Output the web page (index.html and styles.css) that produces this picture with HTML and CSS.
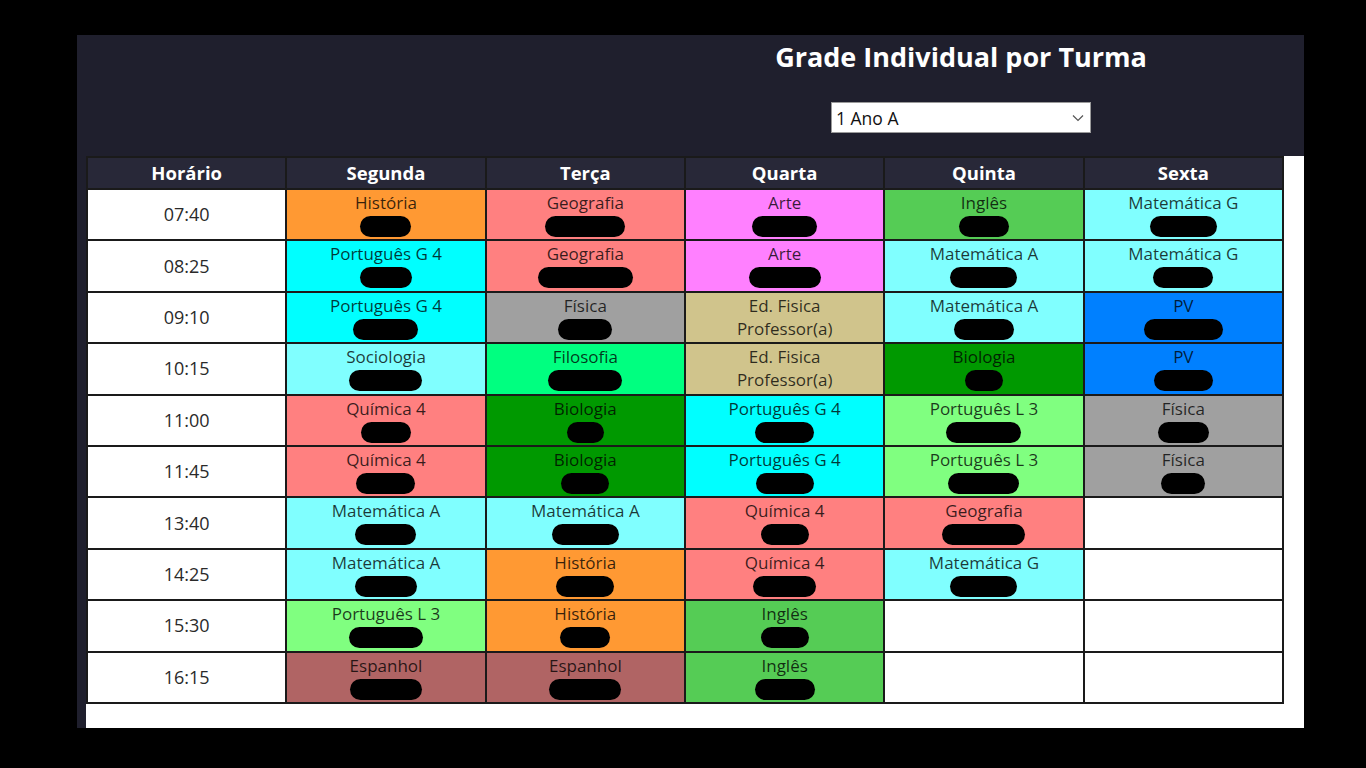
FILE: index.html
```html
<!DOCTYPE html>
<html lang="pt-BR">
<head>
<meta charset="utf-8">
<title>Grade Individual por Turma</title>
<link rel="stylesheet" href="styles.css">
</head>
<body>
<div class="panel">
  <header class="top">
    <div class="spacer"></div>
    <div class="head-main">
      <h1 class="title">Grade Individual por Turma</h1>
      <div class="select-wrap">
        <select class="turma">
          <option>1 Ano A</option>
        </select>
        <svg class="chev" width="12" height="8" viewBox="0 0 12 8"><path d="M1 1.5 L6 6.5 L11 1.5" fill="none" stroke="#555" stroke-width="1.2"/></svg>
      </div>
    </div>
  </header>
  <main class="content">
    <table class="grade">
      <thead>
        <tr>
          <th>Horário</th><th>Segunda</th><th>Terça</th><th>Quarta</th><th>Quinta</th><th>Sexta</th>
        </tr>
      </thead>
      <tbody>
        <tr>
          <td class="time">07:40</td>
          <td class="c-hist">História<span class="blob" style="width:51px"></span></td>
          <td class="c-geo">Geografia<span class="blob" style="width:80px"></span></td>
          <td class="c-arte">Arte<span class="blob" style="width:65px"></span></td>
          <td class="c-ing">Inglês<span class="blob" style="width:50px"></span></td>
          <td class="c-mat">Matemática G<span class="blob" style="width:67px"></span></td>
        </tr>
        <tr>
          <td class="time">08:25</td>
          <td class="c-pg">Português G 4<span class="blob" style="width:52px"></span></td>
          <td class="c-geo">Geografia<span class="blob" style="width:95px"></span></td>
          <td class="c-arte">Arte<span class="blob" style="width:72px"></span></td>
          <td class="c-mat">Matemática A<span class="blob" style="width:67px"></span></td>
          <td class="c-mat">Matemática G<span class="blob" style="width:60px"></span></td>
        </tr>
        <tr>
          <td class="time">09:10</td>
          <td class="c-pg">Português G 4<span class="blob" style="width:65px"></span></td>
          <td class="c-fis">Física<span class="blob" style="width:54px"></span></td>
          <td class="c-edf">Ed. Fisica<br>Professor(a)</td>
          <td class="c-mat">Matemática A<span class="blob" style="width:60px"></span></td>
          <td class="c-pv">PV<span class="blob" style="width:79px"></span></td>
        </tr>
        <tr>
          <td class="time">10:15</td>
          <td class="c-mat">Sociologia<span class="blob" style="width:73px"></span></td>
          <td class="c-filo">Filosofia<span class="blob" style="width:74px"></span></td>
          <td class="c-edf">Ed. Fisica<br>Professor(a)</td>
          <td class="c-bio">Biologia<span class="blob" style="width:38px"></span></td>
          <td class="c-pv">PV<span class="blob" style="width:59px"></span></td>
        </tr>
        <tr>
          <td class="time">11:00</td>
          <td class="c-geo">Química 4<span class="blob" style="width:50px"></span></td>
          <td class="c-bio">Biologia<span class="blob" style="width:37px"></span></td>
          <td class="c-pg">Português G 4<span class="blob" style="width:59px"></span></td>
          <td class="c-pl">Português L 3<span class="blob" style="width:75px"></span></td>
          <td class="c-fis">Física<span class="blob" style="width:51px"></span></td>
        </tr>
        <tr>
          <td class="time">11:45</td>
          <td class="c-geo">Química 4<span class="blob" style="width:59px"></span></td>
          <td class="c-bio">Biologia<span class="blob" style="width:48px"></span></td>
          <td class="c-pg">Português G 4<span class="blob" style="width:58px"></span></td>
          <td class="c-pl">Português L 3<span class="blob" style="width:71px"></span></td>
          <td class="c-fis">Física<span class="blob" style="width:44px"></span></td>
        </tr>
        <tr>
          <td class="time">13:40</td>
          <td class="c-mat">Matemática A<span class="blob" style="width:61px"></span></td>
          <td class="c-mat">Matemática A<span class="blob" style="width:67px"></span></td>
          <td class="c-geo">Química 4<span class="blob" style="width:48px"></span></td>
          <td class="c-geo">Geografia<span class="blob" style="width:83px"></span></td>
          <td class="empty"></td>
        </tr>
        <tr>
          <td class="time">14:25</td>
          <td class="c-mat">Matemática A<span class="blob" style="width:62px"></span></td>
          <td class="c-hist">História<span class="blob" style="width:58px"></span></td>
          <td class="c-geo">Química 4<span class="blob" style="width:63px"></span></td>
          <td class="c-mat">Matemática G<span class="blob" style="width:67px"></span></td>
          <td class="empty"></td>
        </tr>
        <tr>
          <td class="time">15:30</td>
          <td class="c-pl">Português L 3<span class="blob" style="width:74px"></span></td>
          <td class="c-hist">História<span class="blob" style="width:50px"></span></td>
          <td class="c-ing">Inglês<span class="blob" style="width:48px"></span></td>
          <td class="empty"></td>
          <td class="empty"></td>
        </tr>
        <tr>
          <td class="time">16:15</td>
          <td class="c-esp">Espanhol<span class="blob" style="width:72px"></span></td>
          <td class="c-esp">Espanhol<span class="blob" style="width:72px"></span></td>
          <td class="c-ing">Inglês<span class="blob" style="width:60px"></span></td>
          <td class="empty"></td>
          <td class="empty"></td>
        </tr>
      </tbody>
    </table>
  </main>
</div>
</body>
</html>
```
FILE: styles.css
```css
* { box-sizing: border-box; }
html, body { margin: 0; padding: 0; background: #000; }
body {
  font-family: "Open Sans", "Noto Sans", "Liberation Sans", sans-serif;
  height: 768px;
  overflow: hidden;
  padding-top: 35px;
  padding-left: 77px;
}
.panel {
  width: 1227px;
  background: #1f1f2d;
}
.top {
  display: grid;
  grid-template-columns: 541px 1fr;
  height: 121px;
}
.head-main {
  display: flex;
  flex-direction: column;
  align-items: center;
  padding-top: 4px;
}
.title {
  margin: 0;
  color: #fff;
  font-size: 27px;
  line-height: 36px;
  font-weight: 700;
}
.select-wrap {
  position: relative;
  margin-top: 27px;
  width: 260px;
  height: 31px;
}
.turma {
  appearance: none;
  -webkit-appearance: none;
  width: 100%;
  height: 100%;
  border: 1px solid #9a9a9a;
  border-radius: 0;
  background: #fff;
  color: #111;
  font-family: inherit;
  font-size: 17.5px;
  padding: 0 0 0 4px;
  outline: none;
}
.chev {
  position: absolute;
  right: 7px;
  top: 12px;
  pointer-events: none;
}
.content {
  margin-left: 9px;
  background: #fff;
  padding: 0 20px 24px 0;
}
.grade {
  width: 1198px;
  border-collapse: collapse;
  table-layout: fixed;
  border: 2px solid #1a1a1a;
}
.grade th, .grade td {
  border: 2px solid #1a1a1a;
  text-align: center;
  padding: 0;
}
.grade th {
  height: 32px;
  background: #282838;
  color: #fff;
  font-size: 18.5px;
  font-weight: 700;
  line-height: 22px;
  padding-top: 0;
}
.grade td {
  height: 51.4px;
  vertical-align: top;
  font-size: 17px;
  line-height: 23px;
  color: rgba(0, 0, 0, 0.78);
  padding-top: 1px;
}
.grade td.time {
  vertical-align: middle;
  background: #fff;
  color: #2a2a2a;
  font-size: 18px;
  padding-top: 0;
}
.grade td.empty { background: #fff; }
.blob {
  display: block;
  height: 21px;
  margin: 2px auto 0;
  background: #000;
  border-radius: 10.5px;
}
.c-hist { background: #ff9933; }
.c-geo  { background: #ff8080; }
.c-arte { background: #ff80ff; }
.c-ing  { background: #55cc55; }
.c-mat  { background: #80ffff; }
.c-pg   { background: #00ffff; }
.c-fis  { background: #a0a0a0; }
.c-edf  { background: #d0c48c; }
.c-filo { background: #00ff80; }
.c-bio  { background: #009900; }
.c-pv   { background: #0080ff; }
.c-pl   { background: #80ff80; }
.c-esp  { background: #b06464; }
```
